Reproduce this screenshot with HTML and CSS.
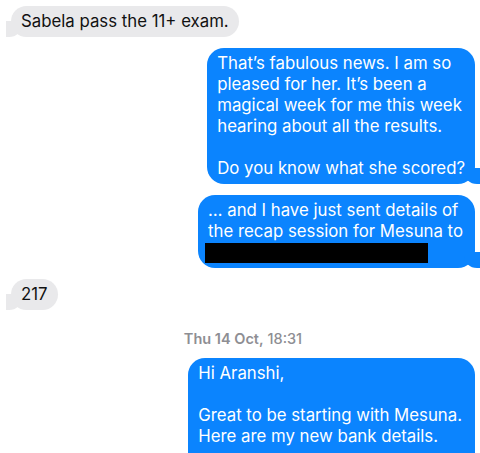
FILE: index.html
```html
<!DOCTYPE html>
<html lang="en">
<head>
<meta charset="utf-8">
<title>Messages</title>
<link rel="stylesheet" href="styles.css">
</head>
<body>
<div class="thread">
  <div class="bubble in tail">Sabela pass the 11+ exam.</div>
  <div class="bubble out tail">That’s fabulous news. I am so<br>pleased for her. It’s been a<br>magical week for me this week<br>hearing about all the results.<br><br>Do you know what she scored?</div>
  <div class="bubble out tail wide">… and I have just sent details of<br>the recap session for Mesuna to<br><span class="redacted"></span></div>
  <div class="bubble in tail">217</div>
  <div class="stamp"><b>Thu 14 Oct,</b> 18:31</div>
  <div class="bubble out last">Hi Aranshi,<br><br>Great to be starting with Mesuna.<br>Here are my new bank details.</div>
</div>
</body>
</html>
```

FILE: styles.css
```css
html, body {
  margin: 0;
  padding: 0;
  background: #fff;
}
body {
  width: 480px;
  height: 453px;
  overflow: hidden;
  font-family: Inter, "Helvetica Neue", Arial, sans-serif;
}
.thread {
  display: flex;
  flex-direction: column;
  gap: 11px;
  padding: 6px 5px 0 11px;
}
.bubble {
  position: relative;
  isolation: isolate;
  font-size: 16.8px;
  line-height: 21px;
  padding: 5px 10px;
  border-radius: 17px;
  white-space: nowrap;
  width: fit-content;
}
.bubble.in {
  align-self: flex-start;
  background: #e9e9eb;
  color: #111;
}
.bubble.out {
  align-self: flex-end;
  background: #0b84fe;
  color: #fff;
}
.bubble.wide {
  padding-right: 12px;
}
.bubble.last {
  padding-bottom: 30px;
  padding-right: 13px;
}
.bubble.in.tail::before {
  content: "";
  position: absolute;
  z-index: -1;
  left: -5px;
  bottom: 0;
  width: 16px;
  height: 16px;
  background: #e9e9eb;
  border-bottom-right-radius: 13px 12px;
}
.bubble.in.tail::after {
  content: "";
  position: absolute;
  z-index: -1;
  left: -14px;
  bottom: 0;
  width: 9px;
  height: 16px;
  background: #fff;
  border-bottom-right-radius: 8px;
}
.bubble.out.tail::before {
  content: "";
  position: absolute;
  z-index: -1;
  right: -5px;
  bottom: 0;
  width: 16px;
  height: 16px;
  background: #0b84fe;
  border-bottom-left-radius: 13px 12px;
}
.bubble.out.tail::after {
  content: "";
  position: absolute;
  z-index: -1;
  right: -14px;
  bottom: 0;
  width: 9px;
  height: 16px;
  background: #fff;
  border-bottom-left-radius: 8px;
}
.redacted {
  display: inline-block;
  width: 223px;
  height: 20px;
  background: #000;
  vertical-align: -5px;
  margin-left: -3px;
}
.stamp {
  align-self: center;
  margin: 9px 0 0;
  font-size: 14.5px;
  line-height: 17px;
  color: #8e8e93;
  font-weight: 500;
}
.stamp b {
  font-weight: 600;
}
```
